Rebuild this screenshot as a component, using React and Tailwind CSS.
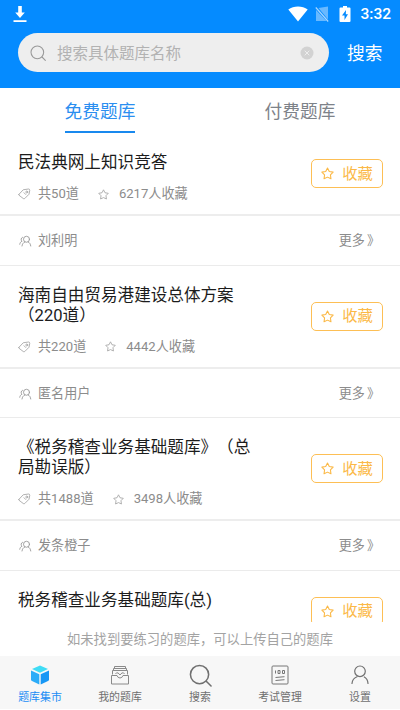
import React, { useState } from 'react';

const banks = [
    { id: 1, title: '民法典网上知识竞答', count: 50, saved: 6217, author: '刘利明' },
    { id: 2, title: '海南自由贸易港建设总体方案（220道）', count: 220, saved: 4442, author: '匿名用户' },
    { id: 3, title: '《税务稽查业务基础题库》（总局勘误版）', count: 1488, saved: 3498, author: '发条橙子' },
    { id: 4, title: '税务稽查业务基础题库(总)' },
];

function StarIcon({ className }) {
    return (
        <svg viewBox="0 0 24 24" className={className} fill="none" stroke="currentColor" strokeWidth="2" strokeLinejoin="round">
            <path d="M12 1.8l3.3 6.4 7.1 1.2-5 5.2 1 7.2-6.4-3.1-6.4 3.1 1-7.2-5-5.2 7.1-1.2z" />
        </svg>
    );
}

function TagIcon() {
    return (
        <svg viewBox="0 0 26 24" className="w-[13px] h-3 shrink-0" fill="none" stroke="#a3a3a3" strokeWidth="1.7" strokeLinejoin="round" strokeLinecap="round">
            <path d="M2 12.5L10.5 3.500l10.500-1.500q2.500 0 2.500 2.500L22 12.500l-8.500 8.500q-1.500 1.500-3 0L2 14.500q-1-1 0-2z" />
            <circle cx="17.5" cy="8" r="1.9" />
            <path d="M12 9.500l3.500 3.500" />
        </svg>
    );
}

function AuthorIcon() {
    return (
        <svg viewBox="0 0 26 24" className="w-[13px] h-3 shrink-0" fill="none" stroke="#999" strokeWidth="1.8" strokeLinecap="round">
            <circle cx="15" cy="8.5" r="6" />
            <path d="M6 22c.5-4 2.5-6.5 5.5-8M18.5 14c3 1.5 4.5 4 5 8M7 4.5C3.5 6 3.5 10.5 6 12.5c-2.5 1-4 3-4.500 6" />
        </svg>
    );
}

function SearchIcon({ className }) {
    return (
        <svg viewBox="0 0 24 24" className={className} fill="none" stroke="currentColor" strokeWidth="1.6" strokeLinecap="round">
            <circle cx="11" cy="11" r="9.5" />
            <path d="M18 18l5 5" />
        </svg>
    );
}

function StatusBar() {
    return (
        <div className="flex h-[28px] items-center justify-between pl-[13px] pr-[9px]">
            <svg viewBox="0 0 14 18" className="w-3.5 h-[18px]" fill="#fff">
                <path d="M5.2 1h3.6v6.5h3L7 13 2.200 7.500h3z" />
                <path d="M.5 15.200h13v1.800H.5z" />
            </svg>
            <div className="flex items-center">
                <svg viewBox="0 0 20 16" className="w-5 h-4" fill="#fff">
                    <path d="M10 15.500L.3 3.500C5.500-.6 14.500-.6 19.700 3.500z" />
                </svg>
                <svg viewBox="0 0 14 16" className="w-3.5 h-4 ml-[7px]">
                    <path d="M3.500 2L13 .5V13.500z M1 4v11h10.500z" fill="#fff" fillOpacity=".4" />
                    <path d="M.8 1.500L13.200 15.500" stroke="#a9d6ff" strokeWidth="1.2" />
                </svg>
                <svg viewBox="0 0 12 18" className="w-3 h-[18px] ml-2.5">
                    <path d="M1.500 2.500H4V1h4v1.500h2.500Q11.500 2.500 11.500 3.500v12.500q0 1-1 1h-9q-1 0-1-1V3.500q0-1 1-1z" fill="#fff" />
                    <path d="M7 5L3 10.500h2.500V15L9 9.300H6.800z" fill="#058bff" />
                </svg>
                <span className="mt-0.5 ml-[9px] text-[15.5px] font-medium text-white leading-none">3:32</span>
            </div>
        </div>
    );
}

function BankItem({ bank }) {
    return (
        <div className="shrink-0">
            <div className="flex items-center justify-between pl-[18px] pr-[17px] border-b-2 border-[#ededed]">
                <div className="w-[244px] pt-5 pb-3">
                    <h2 className="text-[16.6px] leading-5 text-[#1c1c1c]">{bank.title}</h2>
                    <div className="mt-[13px] flex h-4 items-center text-[13.1px] leading-4 text-[#8c8c8c] whitespace-nowrap">
                        {bank.count && (
                            <>
                                <TagIcon />
                                <span className="ml-[7px]">共{bank.count}道</span>
                                <StarIcon className="ml-[19px] w-[11px] h-[11px] text-[#aaa]" />
                                <span className="ml-2.5">{bank.saved}人收藏</span>
                            </>
                        )}
                    </div>
                </div>
                <button className="flex h-[29px] w-[72px] items-center justify-center gap-2 rounded-[5px] border border-[#fdbf55] text-[15.3px] leading-none text-[#fbb947]">
                    <StarIcon className="w-[13px] h-[13px]" />
                    <span className="pt-0.5">收藏</span>
                </button>
            </div>
            {bank.author && (
                <div className="flex h-[49.5px] items-center justify-between border-b border-[#ebebeb] pl-[19px] pr-5 pt-0.5 text-[13.1px] text-[#8c8c8c]">
                    <div className="flex items-center gap-1.5">
                        <AuthorIcon />
                        <span>{bank.author}</span>
                    </div>
                    <span className="flex gap-0.5">
                        <span>更多</span>
                        <span>》</span>
                    </span>
                </div>
            )}
        </div>
    );
}

function MarketIcon() {
    return (
        <svg viewBox="0 0 20 20" className="w-5 h-5">
            <path d="M10 .5L18 4l-8 3.800L2 4z" fill="#3fdcf5" />
            <path d="M1 5.500l8.300 3.800V19.500L2 16q-1-.5-1-1.500z" fill="#2cacf8" />
            <path d="M19 5.500l-8.300 3.800V19.500L18 16q1-.5 1-1.500z" fill="#1797f5" />
        </svg>
    );
}

function MineIcon() {
    return (
        <svg viewBox="0 0 20 20" className="w-5 h-5" fill="none" stroke="#8a8a8a" strokeWidth="1">
            <path d="M4.500 3V1.500h11V3M3.500 5V3.500h13V5M2.500 9.500V5.500h15v4" />
            <path d="M1.500 10.500h5.500q.8 2.500 3 2.500t3-2.500h5.500v8.500h-17z" />
            <path d="M5.500 9q1-2 2.500-1t2 2q.5-1 2-2t2.500 1" />
        </svg>
    );
}

function ExamIcon() {
    return (
        <svg viewBox="0 0 20 20" className="w-5 h-5" fill="none" stroke="#777" strokeWidth="1">
            <rect x="2" y="1" width="16" height="18" rx="1" />
            <path d="M5.500 5.500v3M8 5.500h2v3H8zM12.500 5.500h2v3h-2zM5.500 12.500l9-.8M5.500 15.500l9-.8" />
        </svg>
    );
}

function SettingsIcon() {
    return (
        <svg viewBox="0 0 20 20" className="w-5 h-5" fill="none" stroke="#707070" strokeWidth="1.2" strokeLinecap="round">
            <circle cx="10" cy="6.3" r="5.3" />
            <path d="M2 18.500c.3-3.500 2-5.700 5-6.800M14.300 12c2.200 1.200 3.500 3.300 3.700 6.500" />
        </svg>
    );
}

const navItems = [
    { label: '题库集市', icon: <MarketIcon /> },
    { label: '我的题库', icon: <MineIcon /> },
    { label: '搜索', icon: <SearchIcon className="w-[23px] h-[23px]" /> },
    { label: '考试管理', icon: <ExamIcon /> },
    { label: '设置', icon: <SettingsIcon /> },
];

function App() {
    const [tab, setTab] = useState(0);
    const [page, setPage] = useState(0);

    return (
        <div className="flex h-[710px] w-[400px] flex-col overflow-hidden bg-white font-[Roboto,'Noto_Sans_CJK_SC',sans-serif] [text-spacing-trim:space-all]">
            <header className="h-[88px] shrink-0 bg-[#058bff]">
                <StatusBar />
                <div className="mt-[5px] flex items-center pl-[18px]">
                    <div className="flex h-[39px] w-[311px] items-center rounded-full bg-[#eee] pl-3 pr-[15px]">
                        <SearchIcon className="w-4 h-4 text-[#999]" />
                        <span className="ml-[11px] flex-1 pt-1 text-[15.5px] text-[#b2b2b2]">搜索具体题库名称</span>
                        <svg viewBox="0 0 14 14" className="w-3.5 h-3.5">
                            <circle cx="7" cy="7" r="6.5" fill="#d2d2d2" />
                            <path d="M4.700 4.700l4.600 4.600M9.300 4.700L4.700 9.300" stroke="#eee" strokeWidth="1" />
                        </svg>
                    </div>
                    <button className="ml-[18px] pt-[5px] text-[17.7px] leading-none text-white">搜索</button>
                </div>
            </header>

            <div className="flex h-[45px] shrink-0">
                {['免费题库', '付费题库'].map((name, i) => (
                    <div key={name} className="flex flex-1 justify-center">
                        <button
                            onClick={() => setTab(i)}
                            className={`border-b-2 pt-1.5 text-[17.7px] leading-[37px] ${tab === i ? 'border-[#1989ee] text-[#2a8ef0]' : 'border-transparent text-[#7d8289]'}`}
                        >
                            {name}
                        </button>
                    </div>
                ))}
            </div>

            <main className="flex h-[489px] shrink-0 flex-col overflow-hidden">
                {banks.map((bank) => (
                    <BankItem key={bank.id} bank={bank} />
                ))}
            </main>

            <p className="flex h-[34px] shrink-0 items-center justify-center pt-0.5 text-[13.3px] text-[#a3a3a3]">
                如未找到要练习的题库，可以上传自己的题库
            </p>

            <nav className="flex h-[53px] shrink-0 bg-[#f7f7f7]">
                {navItems.map((item, i) => (
                    <button
                        key={item.label}
                        onClick={() => setPage(i)}
                        className={`flex flex-1 flex-col items-center pt-[7px] text-[10.9px] leading-4 ${page === i ? 'text-[#1b8df5]' : 'text-[#707070]'}`}
                    >
                        <span className="flex h-6 items-center">{item.icon}</span>
                        <span className="mt-[3px]">{item.label}</span>
                    </button>
                ))}
            </nav>
        </div>
    );
}

export default App;
